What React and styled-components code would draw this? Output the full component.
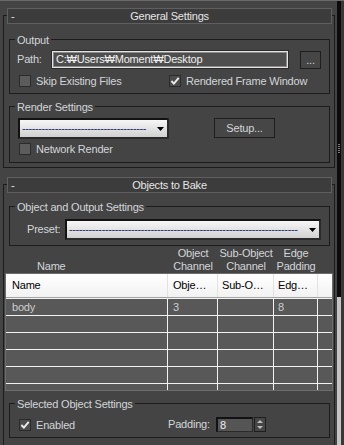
import React from "react";
import styled, { createGlobalStyle } from "styled-components";

const colors = {
  bg: "#444444",
  text: "#d3d6d9",
  bright: "#e6e6e6",
  frame: "#1c1c1c",
  header: "#3c3c3c",
  headerBorder: "#5f5f5f",
  rows: "#585858",
  grid: "#f2f2f2",
};

const GlobalStyle = createGlobalStyle`
  * { box-sizing: border-box; }
  html, body {
    margin: 0;
    padding: 0;
    background: ${colors.bg};
  }
  body {
    font-family: "Liberation Sans", Arial, sans-serif;
    font-size: 11px;
    letter-spacing: -0.2px;
    color: ${colors.text};
  }
`;

const Screen = styled.div`
  width: 344px;
  height: 445px;
  overflow: hidden;
  display: flex;
  background: ${colors.bg};
  border-top: 1px solid #6a6a6a;
`;

const Panel = styled.div`
  flex: none;
  width: 336px;
  padding: 14px 1px 0 3px;
  display: flex;
  flex-direction: column;
  gap: 16px;
`;

const Rollout = styled.section`
  border: 1px solid ${colors.frame};
  padding-bottom: ${(p) => p.$pb}px;
`;

const RolloutHeader = styled.div`
  height: 16px;
  margin: -8px 2px 0 3px;
  border: 1px solid ${colors.headerBorder};
  background: ${colors.header};
  color: ${colors.bright};
  display: grid;
  grid-template-columns: 1fr auto 1fr;
  align-items: center;
  line-height: 14px;

  & > span:first-child {
    padding-left: 3px;
  }
`;

const Group = styled.div`
  margin: ${(p) => p.$mt}px 4px 0 5px;
  border: 1px solid ${colors.frame};
  padding: 0 8px ${(p) => p.$pb}px 7px;
`;

const Legend = styled.div`
  width: fit-content;
  height: 14px;
  line-height: 14px;
  margin: -7px 0 0 -2px;
  padding: 0 2px;
  background: ${colors.bg};
`;

const Row = styled.div`
  display: flex;
  align-items: ${(p) => p.$align || "center"};
  margin-top: ${(p) => p.$mt}px;
  padding-left: ${(p) => p.$pl || 0}px;
`;

const TwoCols = styled.div`
  display: grid;
  grid-template-columns: 151px 1fr;
  align-items: center;
  margin-top: ${(p) => p.$mt}px;
  height: ${(p) => p.$h}px;
`;

const Label = styled.span`
  flex: none;
  width: ${(p) => (p.$w ? `${p.$w}px` : "auto")};
  line-height: ${(p) => p.$lh || 13}px;
  white-space: nowrap;
`;

const PathField = styled.div`
  flex: 1;
  height: 17px;
  border: 1px solid #e4e4e4;
  box-shadow: 0 0 0 1px #2a2a2a, inset 0 0 0 1px #8a8a8a;
  background: #4e4e4e;
  color: #f0f0f0;
  padding-left: 3px;
  line-height: 15px;
  white-space: nowrap;
  overflow: hidden;
`;

const Button = styled.div`
  flex: none;
  width: ${(p) => p.$w}px;
  height: ${(p) => p.$h}px;
  margin-left: ${(p) => p.$ml}px;
  border: 1px solid #1e1e1e;
  background: #464646;
  color: ${colors.text};
  display: flex;
  align-items: center;
  justify-content: center;
  line-height: 1;
`;

const CheckLine = styled.label`
  display: flex;
  align-items: center;
  gap: 5px;
  margin-left: ${(p) => p.$ml || 2}px;
  height: 12px;
  white-space: nowrap;
`;

const Box = styled.span`
  flex: none;
  width: 12px;
  height: 12px;
  border: 1px solid #2c2c2c;
  background: ${(p) => (p.$checked ? "#4c4c4c" : "#5c5c5c")};
  display: flex;
  align-items: center;
  justify-content: center;
`;

const Dropdown = styled.div`
  flex: ${(p) => (p.$w ? "none" : 1)};
  min-width: 0;
  width: ${(p) => (p.$w ? `${p.$w}px` : "auto")};
  height: 21px;
  margin-left: ${(p) => p.$ml || 0}px;
  border: 2px solid #121212;
  border-right-color: #2a2a2a;
  border-bottom-color: #2a2a2a;
  background: linear-gradient(#f7f7f7, #d0d0d0);
  display: flex;
  align-items: center;
  justify-content: space-between;
  padding: 0 3px 0 2px;
`;

const Dashes = styled.span`
  white-space: nowrap;
  color: #1c2a6a;
  letter-spacing: -0.4px;
  line-height: 17px;
`;

const ColumnLabels = styled.div`
  display: grid;
  grid-template-columns: 162px 50px 56px 44px 1fr;
  margin: 1px 2px 0 2px;
  height: 26px;
  line-height: 13px;
  text-align: center;

  & > span:first-child {
    align-self: end;
    text-align: left;
    padding-left: 31px;
  }
`;

const Table = styled.div`
  margin: 0 1px;
  border: 1px solid #6c6c6c;
`;

const HeadRow = styled.div`
  display: grid;
  grid-template-columns: 162px 50px 56px 44px 1fr;
  height: 24px;
  background: linear-gradient(#ffffff, #f2f2f2);
  border-bottom: 1px solid #a4a4a4;
  color: #000;
`;

const HeadCell = styled.span`
  border-right: ${(p) => (p.$last ? "none" : "1px solid #e2e2e2")};
  padding-left: ${(p) => p.$pl}px;
  line-height: 23px;
  white-space: nowrap;
`;

const Body = styled.div`
  height: 92px;
  overflow: hidden;
  background: ${colors.rows};
  border-top: 1px solid ${colors.grid};
`;

const BodyRow = styled.div`
  display: grid;
  grid-template-columns: 162px 50px 56px 44px 1fr;
  height: 17px;
  border-bottom: 1px solid ${colors.grid};
  color: #cdcdcd;
`;

const BodyCell = styled.span`
  border-right: ${(p) => (p.$last ? "none" : `1px solid ${colors.grid}`)};
  padding-left: ${(p) => p.$pl}px;
  line-height: 16px;
`;

const SpinField = styled.div`
  width: 37px;
  height: 15px;
  border: 2px solid #121212;
  border-right: 1px solid #2a2a2a;
  border-bottom: 1px solid #2a2a2a;
  background: #555555;
  color: #eeeeee;
  padding-left: 2px;
  line-height: 12px;
`;

const SpinArrows = styled.div`
  width: 12px;
  height: 15px;
  margin-left: 1px;
  border: 1px solid #1e1e1e;
  background: #464646;
  display: flex;
  flex-direction: column;
  align-items: center;
  justify-content: space-around;
`;

const Scrollbar = styled.div`
  flex: none;
  width: 8px;
  display: flex;
  padding-left: 1px;
`;

const Track = styled.div`
  width: 4px;
  display: flex;
  flex-direction: column;
  background: #c4c4c4;
`;

const Thumb = styled.div`
  height: 296px;
  background: #0c0c0c;
  display: flex;
  align-items: center;
  justify-content: center;
`;

const Grip = styled.div`
  width: 2px;
  height: 10px;
  background: repeating-linear-gradient(#7a7a7a 0 1px, transparent 1px 2px);
`;

const Gutter = styled.div`
  width: 3px;
  background: #383838;
`;

const Arrow = () => (
  <svg width="7" height="4" viewBox="0 0 7 4">
    <polygon points="0,0 7,0 3.5,4" fill="#000" />
  </svg>
);

const Select = ({ dashes, ...rest }) => (
  <Dropdown {...rest}>
    <Dashes>{"-".repeat(dashes)}</Dashes>
    <Arrow />
  </Dropdown>
);

const Checkbox = ({ checked, children, ml }) => (
  <CheckLine $ml={ml}>
    <Box $checked={checked}>
      {checked && (
        <svg width="10" height="10" viewBox="0 0 10 10">
          <path
            d="M1.4 5 L3.9 7.6 L8.7 1.9"
            fill="none"
            stroke="#ececec"
            strokeWidth="1.9"
          />
        </svg>
      )}
    </Box>
    {children}
  </CheckLine>
);

const Header = ({ children }) => (
  <RolloutHeader>
    <span>-</span>
    <span>{children}</span>
    <span />
  </RolloutHeader>
);

const emptyRows = [1, 2, 3, 4, 5];

const App = () => {
  return (
    <>
      <GlobalStyle />
      <Screen>
        <Panel>
          <Rollout $pb={4}>
            <Header>General Settings</Header>

            <Group $mt={15} $pb={6}>
              <Legend>Output</Legend>
              <Row $mt={4} $align="flex-start">
                <Label $w={35} $lh={17}>
                  Path:
                </Label>
                <PathField>C:₩Users₩Moment₩Desktop</PathField>
                <Button $w={21} $h={18} $ml={12}>
                  ...
                </Button>
              </Row>
              <TwoCols $mt={6} $h={12}>
                <Checkbox>Skip Existing Files</Checkbox>
                <Checkbox checked ml={1}>
                  Rendered Frame Window
                </Checkbox>
              </TwoCols>
            </Group>

            <Group $mt={12} $pb={7}>
              <Legend>Render Settings</Legend>
              <Row $mt={4} $align="flex-start">
                <Select $w={151} $ml={1} dashes={38} />
                <Button $w={61} $h={20} $ml={45}>
                  Setup...
                </Button>
              </Row>
              <Row $mt={4}>
                <Checkbox>Network Render</Checkbox>
              </Row>
            </Group>
          </Rollout>

          <Rollout $pb={14}>
            <Header>Objects to Bake</Header>

            <Group $mt={13} $pb={5}>
              <Legend>Object and Output Settings</Legend>
              <Row $mt={5} $pl={10}>
                <Label $w={38}>Preset:</Label>
                <Select dashes={70} />
              </Row>
            </Group>

            <ColumnLabels>
              <span>Name</span>
              <span>
                Object
                <br />
                Channel
              </span>
              <span>
                Sub-Object
                <br />
                Channel
              </span>
              <span>
                Edge
                <br />
                Padding
              </span>
              <span />
            </ColumnLabels>

            <Table>
              <HeadRow>
                <HeadCell $pl={6}>Name</HeadCell>
                <HeadCell $pl={5}>Obje…</HeadCell>
                <HeadCell $pl={4}>Sub-O…</HeadCell>
                <HeadCell $pl={4}>Edg…</HeadCell>
                <HeadCell $last />
              </HeadRow>
              <Body>
                <BodyRow>
                  <BodyCell $pl={6}>body</BodyCell>
                  <BodyCell $pl={5}>3</BodyCell>
                  <BodyCell $pl={4} />
                  <BodyCell $pl={4}>8</BodyCell>
                  <BodyCell $last />
                </BodyRow>
                {emptyRows.map((r) => (
                  <BodyRow key={r}>
                    <BodyCell />
                    <BodyCell />
                    <BodyCell />
                    <BodyCell />
                    <BodyCell $last />
                  </BodyRow>
                ))}
              </Body>
            </Table>

            <Group $mt={12} $pb={5}>
              <Legend>Selected Object Settings</Legend>
              <TwoCols $mt={6} $h={15}>
                <Checkbox checked>Enabled</Checkbox>
                <Row>
                  <Label $w={48}>Padding:</Label>
                  <SpinField>8</SpinField>
                  <SpinArrows>
                    <svg width="6" height="3" viewBox="0 0 6 3">
                      <polygon points="0,3 6,3 3,0" fill="#bdbdbd" />
                    </svg>
                    <svg width="6" height="3" viewBox="0 0 6 3">
                      <polygon points="0,0 6,0 3,3" fill="#bdbdbd" />
                    </svg>
                  </SpinArrows>
                </Row>
              </TwoCols>
            </Group>
          </Rollout>
        </Panel>

        <Scrollbar>
          <Track>
            <Thumb>
              <Grip />
            </Thumb>
          </Track>
          <Gutter />
        </Scrollbar>
      </Screen>
    </>
  );
};

export default App;
